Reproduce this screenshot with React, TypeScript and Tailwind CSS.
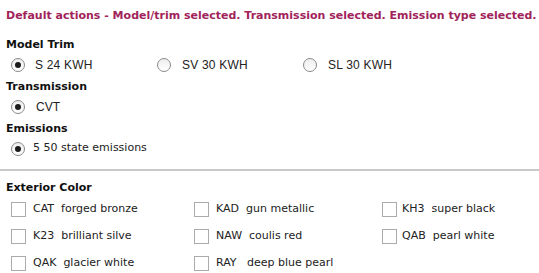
import React from "react";

const tahoma = { fontFamily: '"DejaVu Sans", Verdana, sans-serif' };
const arial = { fontFamily: '"Liberation Sans", Arial, sans-serif' };

function Radio({ checked }: { checked?: boolean }) {
  return (
    <span className="flex h-[14px] w-[14px] shrink-0 items-center justify-center rounded-full border border-[#8a8a8a] bg-gradient-to-b from-[#eeeeee] to-white">
      {checked && <span className="h-[6px] w-[6px] rounded-full bg-[#1a1a1a]" />}
    </span>
  );
}

function Checkbox() {
  return <span className="block h-[15px] w-[15px] shrink-0 border border-[#ababab] bg-white" />;
}

function Heading({ children }: { children: React.ReactNode }) {
  return (
    <div className="flex h-[20px] items-center text-[11px] font-bold text-[#111]" style={tahoma}>
      {children}
    </div>
  );
}

export default function App() {
  const colors = [
    ["CAT  forged bronze", "KAD  gun metallic", "KH3  super black"],
    ["K23  brilliant silve", "NAW  coulis red", "QAB  pearl white"],
    ["QAK  glacier white", "RAY   deep blue pearl", ""],
  ];
  return (
    <div className="h-[273px] w-[539px] overflow-hidden bg-white text-[#222]">
      <div className="px-[6px]">
        <div
          className="mt-[8px] flex h-[16px] items-center whitespace-nowrap text-[11px] font-bold text-[#a0245a]"
          style={tahoma}
        >
          Default actions - Model/trim selected. Transmission selected. Emission type selected.
        </div>
        <div className="mt-[11px]">
          <Heading>Model Trim</Heading>
          <div className="flex h-[19px] items-center text-[12px] tracking-[0.2px] text-[#222]" style={arial}>
            <div className="flex w-[151px] items-center pl-[5px]">
              <Radio checked />
              <span className="ml-[10px]">S 24 KWH</span>
            </div>
            <div className="flex w-[146px] items-center">
              <Radio />
              <span className="ml-[11px]">SV 30 KWH</span>
            </div>
            <div className="flex items-center">
              <Radio />
              <span className="ml-[11px]">SL 30 KWH</span>
            </div>
          </div>
        </div>
        <div className="mt-[3px]">
          <Heading>Transmission</Heading>
          <div className="flex h-[19px] items-center pl-[5px] text-[12px]" style={arial}>
            <Radio checked />
            <span className="ml-[11px]">CVT</span>
          </div>
        </div>
        <div className="mt-[3px]">
          <Heading>Emissions</Heading>
          <div className="flex h-[19px] items-center pl-[5px] text-[11px]" style={tahoma}>
            <Radio checked />
            <span className="ml-[8px]">5 50 state emissions</span>
          </div>
        </div>
      </div>
      <div className="mt-[11px] h-[2px] w-full bg-[#c9c9c9]" />
      <div className="px-[6px] pt-[7px]">
        <Heading>Exterior Color</Heading>
        <div className="mt-[1px] flex flex-col gap-[7px]">
          {colors.map((row, i) => (
            <div key={i} className="flex h-[20px] items-center text-[11px] text-[#222]" style={tahoma}>
              {row.map((c, j) => (
                <div
                  key={j}
                  className={
                    j === 0
                      ? "flex w-[188px] items-center pl-[5px]"
                      : j === 1
                      ? "flex w-[188px] items-center"
                      : "flex items-center"
                  }
                >
                  {c && (
                    <>
                      <Checkbox />
                      <span className={j === 2 ? "ml-[5px] whitespace-pre" : "ml-[7px] whitespace-pre"}>{c}</span>
                    </>
                  )}
                </div>
              ))}
            </div>
          ))}
        </div>
      </div>
    </div>
  );
}
